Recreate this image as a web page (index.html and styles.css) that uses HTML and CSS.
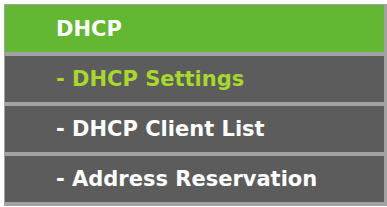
FILE: index.html
```html
<!DOCTYPE html>
<html lang="en">
  <head>
    <meta charset="utf-8" />
    <title>DHCP</title>
    <link rel="stylesheet" href="styles.css">
  </head>
  <body>
    <!-- ______MENU______ -->
    <nav class="menu">
      <div class="menu-head">DHCP</div>
      <a class="menu-item valgt" href="#">- DHCP Settings</a>
      <a class="menu-item" href="#">- DHCP Client List</a>
      <a class="menu-item" href="#">- Address Reservation</a>
    </nav>
  </body>
</html>
```

FILE: styles.css
```css
body {
  margin: 0;
  padding: 4px 0 0 4px;
  background-color: white;
  font-family: "DejaVu Sans", sans-serif;
}

.menu {
  display: flex;
  flex-direction: column;
  gap: 4px;
  width: 383px;
  padding: 1px 3px 4px 1px;
  box-sizing: border-box;
  background-color: #a2a2a2;
}

.menu-head,
.menu-item {
  display: flex;
  align-items: center;
  padding-left: 51px;
  font-size: 21px;
  font-weight: bold;
  text-decoration: none;
}

.menu-head {
  height: 47px;
  background-color: #62b832;
  color: white;
}

.menu-item {
  height: 46px;
  background-color: #5c5c5c;
  color: white;
}

.valgt {
  color: #a8d82e;
}
```
